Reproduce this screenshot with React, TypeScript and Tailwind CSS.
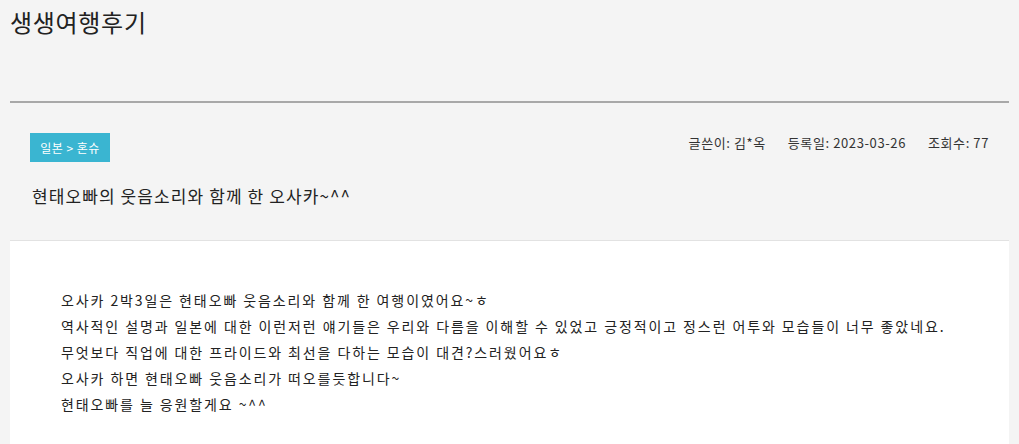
import React from "react";

export default function App() {
  const font = { fontFamily: '"Noto Sans CJK KR", "Noto Sans", sans-serif' };
  return (
    <div className="min-h-[444px] bg-[#f4f4f4] px-[10px] text-[#222]" style={font}>
      <div className="h-[103px] border-b-2 border-[#a8a8a8]">
        <h1 className="pt-[6px] text-[24px] leading-[32px] font-normal tracking-[0.7px] text-[#222]">생생여행후기</h1>
      </div>
      <div className="h-[138px] border-b border-[#e2e2e2] px-[20px] pt-[30px]">
        <div className="flex items-start justify-between">
          <div className="flex h-[29px] w-[80px] items-center justify-center bg-[#3ab5d1] text-[12px] tracking-[0.5px] text-white">
            일본 &gt; 혼슈
          </div>
          <div className="flex gap-[22px] pt-[1px] text-[13px] leading-[18px] tracking-[0.6px] text-[#333]">
            <span>글쓴이: 김*옥</span>
            <span>등록일: 2023-03-26</span>
            <span>조회수: 77</span>
          </div>
        </div>
        <div className="mt-[22px] pl-[2px] text-[17px] leading-[24px] tracking-[1.1px] text-[#222]">
          현태오빠의 웃음소리와 함께 한 오사카~^^
        </div>
      </div>
      <div className="min-h-[203px] bg-white pl-[51px] pt-[46px] text-[14px] leading-[26px] tracking-[1.9px] text-[#222]">
        <p>오사카 2박3일은 현태오빠 웃음소리와 함께 한 여행이였어요~ㅎ</p>
        <p>역사적인 설명과 일본에 대한 이런저런 얘기들은 우리와 다름을 이해할 수 있었고 긍정적이고 정스런 어투와 모습들이 너무 좋았네요.</p>
        <p>무엇보다 직업에 대한 프라이드와 최선을 다하는 모습이 대견?스러웠어요ㅎ</p>
        <p>오사카 하면 현태오빠 웃음소리가 떠오를듯합니다~</p>
        <p>현태오빠를 늘 응원할게요 ~^^</p>
      </div>
    </div>
  );
}
